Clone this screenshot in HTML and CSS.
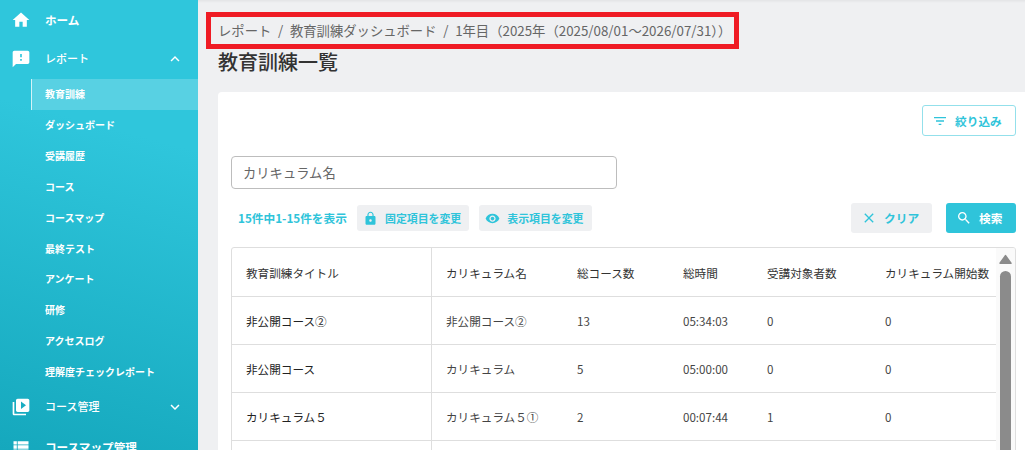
FILE: index.html
```
<!DOCTYPE html>
<html lang="ja">
<head>
  <meta charset="UTF-8">
  <meta name="viewport" content="width=device-width, initial-scale=1.0">
  <title>教育訓練一覧</title>
  <link rel="stylesheet" href="styles.css">
</head>
<body>

  <!-- Sidebar -->
  <nav class="sidebar">
    <a class="menu-item menu-home">
      <svg class="menu-icon" viewBox="0 0 24 24"><path d="M10 20v-6h4v6h5v-8h3L12 3 2 12h3v8z"/></svg>
      <span>ホーム</span>
    </a>
    <a class="menu-item menu-report">
      <svg class="menu-icon" viewBox="0 0 24 24"><path d="M20 2H4c-1.100 0-1.990.9-1.990 2L2 22l4-4h14c1.100 0 2-.9 2-2V4c0-1.100-.9-2-2-2zm-7 12h-2v-2h2v2zm0-4h-2V6h2v4z"/></svg>
      <span>レポート</span>
      <svg class="menu-arrow" viewBox="0 0 24 24"><path d="M12 8l-6 6 1.410 1.410L12 10.830l4.590 4.580L18 14z"/></svg>
    </a>
    <div class="submenu">
      <a class="submenu-item active">教育訓練</a>
      <a class="submenu-item">ダッシュボード</a>
      <a class="submenu-item">受講履歴</a>
      <a class="submenu-item">コース</a>
      <a class="submenu-item">コースマップ</a>
      <a class="submenu-item">最終テスト</a>
      <a class="submenu-item">アンケート</a>
      <a class="submenu-item">研修</a>
      <a class="submenu-item">アクセスログ</a>
      <a class="submenu-item">理解度チェックレポート</a>
    </div>
    <a class="menu-item menu-course">
      <svg class="menu-icon" viewBox="0 0 24 24"><path d="M4 6H2v14c0 1.100.9 2 2 2h14v-2H4V6zm16-4H8c-1.100 0-2 .9-2 2v12c0 1.100.9 2 2 2h12c1.100 0 2-.9 2-2V4c0-1.100-.9-2-2-2zm-8 12.500v-9l6 4.500-6 4.500z"/></svg>
      <span>コース管理</span>
      <svg class="menu-arrow" viewBox="0 0 24 24"><path d="M7.410 8.590L12 13.170l4.590-4.580L18 10l-6 6-6-6z"/></svg>
    </a>
    <a class="menu-item menu-map">
      <svg class="menu-icon" viewBox="0 0 24 24"><path d="M3 14h4v-4H3v4zm0 5h4v-4H3v4zM3 9h4V5H3v4zm5 5h13v-4H8v4zm0 5h13v-4H8v4zM8 5v4h13V5H8z"/></svg>
      <span>コースマップ管理</span>
    </a>
  </nav>

  <main class="content">
    <div class="breadcrumb">
      <span>レポート</span>
      <span class="slash">/</span>
      <span>教育訓練ダッシュボード</span>
      <span class="slash">/</span>
      <span>1年目（2025年（2025/08/01～2026/07/31））</span>
    </div>
    <h1 class="page-title">教育訓練一覧</h1>

    <section class="card">
      <div class="filter-row">
        <button class="btn btn-outline">
          <svg viewBox="0 0 24 24"><path d="M10 18h4v-2h-4v2zM3 6v2h18V6H3zm3 7h12v-2H6v2z"/></svg>
          絞り込み
        </button>
      </div>

      <input class="search-input" type="text" placeholder="カリキュラム名">

      <div class="toolbar">
        <span class="count">15件中1-15件を表示</span>
        <button class="btn btn-small">
          <svg viewBox="0 0 24 24"><path d="M18 8h-1V6c0-2.760-2.240-5-5-5S7 3.240 7 6v2H6c-1.100 0-2 .9-2 2v10c0 1.100.9 2 2 2h12c1.100 0 2-.9 2-2V10c0-1.100-.9-2-2-2zm-6 9c-1.100 0-2-.9-2-2s.9-2 2-2 2 .9 2 2-.9 2-2 2zm3.100-9H8.900V6c0-1.710 1.390-3.100 3.100-3.100s3.100 1.390 3.100 3.100v2z"/></svg>
          固定項目を変更
        </button>
        <button class="btn btn-small">
          <svg viewBox="0 0 24 24"><path d="M12 4.500C7 4.500 2.730 7.610 1 12c1.730 4.390 6 7.500 11 7.500s9.270-3.110 11-7.500c-1.730-4.390-6-7.500-11-7.500zM12 17c-2.760 0-5-2.240-5-5s2.240-5 5-5 5 2.240 5 5-2.240 5-5 5zm0-8c-1.660 0-3 1.340-3 3s1.340 3 3 3 3-1.340 3-3-1.340-3-3-3z"/></svg>
          表示項目を変更
        </button>
        <button class="btn btn-clear">
          <svg viewBox="0 0 24 24"><path d="M19 6.410L17.590 5 12 10.590 6.410 5 5 6.410 10.590 12 5 17.590 6.410 19 12 13.410 17.590 19 19 17.590 13.410 12z"/></svg>
          クリア
        </button>
        <button class="btn btn-search">
          <svg viewBox="0 0 24 24"><path d="M15.500 14h-.79l-.28-.27C15.410 12.590 16 11.110 16 9.500 16 5.910 13.090 3 9.500 3S3 5.910 3 9.500 5.910 16 9.500 16c1.610 0 3.090-.59 4.230-1.570l.27.28v.79l5 4.990L20.490 19l-4.990-5zm-6 0C7.010 14 5 11.990 5 9.500S7.010 5 9.500 5 14 7.010 14 9.500 11.990 14 9.500 14z"/></svg>
          検索
        </button>
      </div>

      <div class="table-wrap">
        <table class="table">
          <colgroup>
            <col class="col-title">
            <col class="col-name">
            <col class="col-courses">
            <col class="col-time">
            <col class="col-target">
            <col class="col-started">
          </colgroup>
          <thead>
            <tr>
              <th>教育訓練タイトル</th>
              <th>カリキュラム名</th>
              <th>総コース数</th>
              <th>総時間</th>
              <th>受講対象者数</th>
              <th>カリキュラム開始数</th>
            </tr>
          </thead>
          <tbody>
            <tr>
              <td>非公開コース②</td>
              <td>非公開コース②</td>
              <td>13</td>
              <td>05:34:03</td>
              <td>0</td>
              <td>0</td>
            </tr>
            <tr>
              <td>非公開コース</td>
              <td>カリキュラム</td>
              <td>5</td>
              <td>05:00:00</td>
              <td>0</td>
              <td>0</td>
            </tr>
            <tr>
              <td>カリキュラム５</td>
              <td>カリキュラム５①</td>
              <td>2</td>
              <td>00:07:44</td>
              <td>1</td>
              <td>0</td>
            </tr>
            <tr>
              <td></td>
              <td></td>
              <td></td>
              <td></td>
              <td></td>
              <td></td>
            </tr>
          </tbody>
        </table>
        <div class="scrollbar">
          <svg class="scroll-up" viewBox="0 0 12 10"><path d="M6 1.500L11 8.500H1z"/></svg>
          <div class="scroll-thumb"></div>
        </div>
      </div>
    </section>
  </main>

</body>
</html>
```
FILE: styles.css
```
* {
  box-sizing: border-box;
}

body {
  margin: 0;
  height: 100vh;
  display: flex;
  overflow: hidden;
  background: #eff0f2;
  color: #333;
  font-family: "Noto Sans CJK JP", sans-serif;
  font-size: 11.6px;
}

/* Sidebar */
.sidebar {
  width: 198px;
  flex-shrink: 0;
  height: 450px;
  overflow: hidden;
  background: linear-gradient(195deg, #2fc6dc 30%, #15a8bd 100%);
  color: #fff;
  font-weight: 500;
}

.menu-item {
  display: flex;
  align-items: center;
  height: 39px;
  padding: 0 14px 0 11px;
  font-size: 11px;
}

.menu-item span {
  margin-left: 14px;
  line-height: 16px;
}

.menu-icon {
  width: 20px;
  height: 20px;
  fill: #fff;
}

.menu-arrow {
  width: 18px;
  height: 18px;
  margin-left: auto;
  fill: #fff;
}

.menu-home {
  font-size: 11.6px;
  font-weight: 700;
}

.menu-report {
  height: 40px;
}

.menu-report span,
.menu-course span {
  padding-bottom: 2px;
}

.menu-map {
  height: 42px;
  font-size: 11.6px;
  font-weight: 700;
}

.submenu {
  margin-left: 31px;
}

.submenu-item {
  display: flex;
  align-items: center;
  height: 30.85px;
  padding: 0 0 1px 14px;
  font-size: 10px;
  font-weight: 700;
}

.submenu-item.active {
  padding-left: 13px;
  border-left: 1px solid #d5f3f7;
  background: rgba(255, 255, 255, 0.2);
}

/* Main */
.content {
  flex: 1;
  min-width: 0;
  height: 450px;
  padding: 12px 0 0 20px;
  overflow: hidden;
  background: linear-gradient(#e3e4e6, #eff0f2 3px);
}

.breadcrumb {
  display: flex;
  align-items: center;
  width: 533px;
  height: 37px;
  margin-left: -12px;
  padding-left: 7px;
  border: 5px solid #ef1b24;
  color: #666;
  font-size: 13.33px;
  white-space: nowrap;
}

.slash {
  margin: 0 6.700px;
}

.page-title {
  margin: 0;
  height: 43px;
  font-size: 20px;
  font-weight: 500;
  line-height: 25px;
}

.card {
  height: 400px;
  padding: 13px 9px 0 13px;
  background: #fff;
  border-radius: 4px 0 0 0;
}

.filter-row {
  display: flex;
  justify-content: flex-end;
}

.btn {
  display: flex;
  align-items: center;
  padding: 0;
  border: none;
  border-radius: 3px;
  background: #eff0f2;
  color: #2fc4da;
  font-family: inherit;
  font-size: 11.7px;
  font-weight: 700;
  line-height: 16px;
  white-space: nowrap;
}

.btn svg {
  fill: currentColor;
  flex-shrink: 0;
}

.btn-outline {
  width: 94px;
  height: 31px;
  padding-left: 9px;
  gap: 7px;
  border: 1px solid #93e0eb;
  background: #fff;
}

.btn-outline svg {
  width: 16px;
  height: 16px;
}

.search-input {
  display: block;
  width: 386px;
  height: 33px;
  margin-top: 20px;
  padding: 0 11px;
  border: 1px solid #bdbdbd;
  border-radius: 4px;
  font-family: inherit;
  font-size: 13.3px;
}

.search-input::placeholder {
  color: #666;
}

.toolbar {
  display: flex;
  align-items: center;
  height: 30px;
  margin-top: 14px;
  padding-left: 7px;
}

.count {
  width: 119px;
  padding-bottom: 2px;
  color: #2fc4da;
  font-size: 11.7px;
  font-weight: 700;
  white-space: nowrap;
}

.btn-small {
  height: 26px;
  margin-right: 10px;
  padding: 0 8px 0 6px;
  gap: 7px;
  font-size: 10.900px;
}

.btn-small svg {
  width: 15px;
  height: 15px;
}

.btn-clear,
.btn-search {
  height: 30px;
}

.btn-clear {
  width: 81px;
  margin-left: auto;
  margin-right: 14px;
  padding-left: 10px;
  gap: 7px;
}

.btn-search {
  width: 70px;
  padding-left: 10px;
  gap: 7px;
  background: #2fc4da;
  color: #fff;
}

.btn-clear svg,
.btn-search svg {
  width: 16px;
  height: 16px;
}

/* Table */
.table-wrap {
  display: flex;
  height: 320px;
  margin-top: 14px;
  border: 1px solid #dedede;
  border-radius: 3px;
  overflow: hidden;
}

.table {
  width: 764px;
  flex-shrink: 0;
  align-self: flex-start;
  table-layout: fixed;
  border-collapse: separate;
  border-spacing: 0;
}

.table th,
.table td {
  height: 48px;
  padding: 0 0 0 14px;
  border-bottom: 1px solid #dedede;
  font-weight: 400;
  line-height: 16px;
  text-align: left;
  white-space: nowrap;
}

.table th {
  height: 49px;
  padding-top: 2px;
}

.table th:first-child,
.table td:first-child {
  border-right: 1px solid #dedede;
}

.table td {
  color: #444;
}

.table td:first-child {
  color: #222;
}

.col-title {
  width: 200px;
}

.col-name {
  width: 131px;
}

.col-courses {
  width: 106px;
}

.col-time {
  width: 84px;
}

.col-target {
  width: 118px;
}

.col-started {
  width: 125px;
}

.scrollbar {
  display: flex;
  flex-direction: column;
  align-items: center;
  flex: 1;
  padding-top: 6px;
  background: #fafafa;
}

.scroll-up {
  width: 13px;
  height: 11px;
  fill: #8b8b8b;
  stroke: #8b8b8b;
  stroke-width: 1.5;
  stroke-linejoin: round;
}

.scroll-thumb {
  width: 11px;
  height: 280px;
  margin-top: 6px;
  border-radius: 6px;
  background: #8b8b8b;
}
```
